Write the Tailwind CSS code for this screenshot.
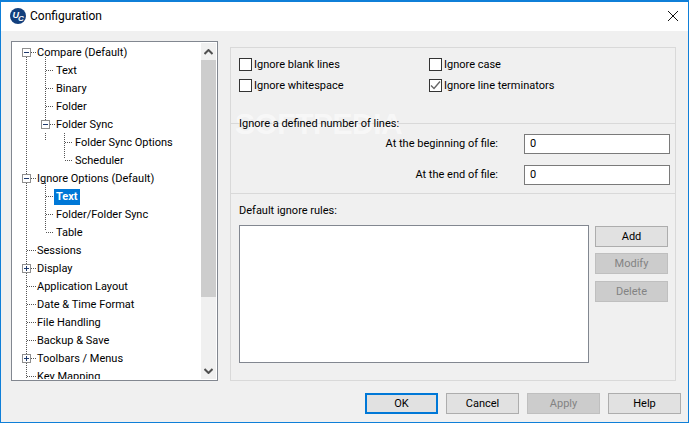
<!doctype html>
<html lang="en">
    <head>
        <meta charset="UTF-8" />
        <title>Configuration</title>
        <script src="https://cdn.jsdelivr.net/npm/@tailwindcss/browser@4"></script>
    </head>
    <body class="m-0 overflow-hidden bg-[#f0f0f0]">
        <div class="relative flex h-[423px] w-[689px] flex-col overflow-hidden border border-t-2 border-[#0f7fd8] bg-[#f0f0f0] font-['Roboto','Noto_Sans',sans-serif] text-[11px] leading-[16px] text-black">
            <!-- watermark -->
            <span class="pointer-events-none absolute left-[234px] top-[107px] font-['Liberation_Sans',sans-serif] text-[30px] font-bold leading-[30px] tracking-[-0.5px] text-white/50">SOFTPEDIA</span>

            <!-- title bar -->
            <div class="flex h-[29px] shrink-0 items-center bg-white pb-[2px] pl-[9px] pr-[8px]">
                <svg width="16" height="16" viewBox="0 0 16 16" class="shrink-0">
                    <circle cx="8" cy="8" r="8" fill="#123f7d" />
                    <text x="2.6" y="9.5" fill="#fff" font-family="Liberation Sans" font-size="9" font-weight="700" font-style="italic">U</text>
                    <text x="8" y="13" fill="#fff" font-family="Liberation Sans" font-size="8" font-weight="700" font-style="italic">C</text>
                </svg>
                <span class="ml-[4px] mt-px flex-1 text-[12px]">Configuration</span>
                <svg width="12" height="12" viewBox="0 0 12 12" class="mr-[1px] mt-px shrink-0">
                    <path d="M1 1 L11 11 M11 1 L1 11" stroke="#111" stroke-width="1" fill="none" />
                </svg>
            </div>

            <div class="flex min-h-0 flex-1 pl-[10px] pr-[12px] pt-[10px]">
                <!-- tree -->
                <div class="relative flex h-[340px] w-[207px] shrink-0 overflow-hidden border border-[#828790] bg-white p-px">
                    <div class="relative h-[336px] w-[188px] overflow-hidden">
                        <svg width="188" height="336" class="absolute left-0 top-0" fill="none" stroke="#555" stroke-dasharray="1 1">
                            <path d="M13.5 14V336" />
                            <path d="M32.5 14V80M32.5 90V98" />
                            <path d="M51.5 90V116" />
                            <path d="M32.5 140V188" />
                            <path d="M18 9.5H23M33 27.5H41M33 45.5H41M33 63.5H41M37 81.5H42M52 99.5H60M52 117.5H60M18 135.5H23M33 153.5H41M33 171.5H41M33 189.5H41M14 207.5H23M18 225.5H23M14 243.5H23M14 261.5H23M14 279.5H23M14 297.5H23M18 315.5H23M14 333.5H23" />
                        </svg>
                        <svg width="188" height="336" class="absolute left-0 top-0">
                            <g fill="#fff" stroke="#8f8f8f">
                                <rect x="9.5" y="5.5" width="8" height="8" />
                                <rect x="28.5" y="77.5" width="8" height="8" />
                                <rect x="9.5" y="131.5" width="8" height="8" />
                                <rect x="9.5" y="221.5" width="8" height="8" />
                                <rect x="9.5" y="311.5" width="8" height="8" />
                            </g>
                            <path d="M11 9.5H16M30 81.5H35M11 135.5H16M11 225.5H16M11 315.5H16M13.5 223V228M13.5 313V318" stroke="#1e3a6e" fill="none" />
                        </svg>
                        <ul class="relative pt-px">
                            <li class="flex h-[18px] items-center pl-[24px]">Compare (Default)</li>
                            <li class="flex h-[18px] items-center pl-[43px]">Text</li>
                            <li class="flex h-[18px] items-center pl-[43px]">Binary</li>
                            <li class="flex h-[18px] items-center pl-[43px]">Folder</li>
                            <li class="flex h-[18px] items-center pl-[43px]">Folder Sync</li>
                            <li class="flex h-[18px] items-center pl-[62px]">Folder Sync Options</li>
                            <li class="flex h-[18px] items-center pl-[62px]">Scheduler</li>
                            <li class="flex h-[18px] items-center pl-[24px]">Ignore Options (Default)</li>
                            <li class="flex h-[18px] items-center pl-[41px]"><span class="bg-[#0078d7] px-[2px] font-bold text-white">Text</span></li>
                            <li class="flex h-[18px] items-center pl-[43px]">Folder/Folder Sync</li>
                            <li class="flex h-[18px] items-center pl-[43px]">Table</li>
                            <li class="flex h-[18px] items-center pl-[24px]">Sessions</li>
                            <li class="flex h-[18px] items-center pl-[24px]">Display</li>
                            <li class="flex h-[18px] items-center pl-[24px]">Application Layout</li>
                            <li class="flex h-[18px] items-center pl-[24px]">Date &amp; Time Format</li>
                            <li class="flex h-[18px] items-center pl-[24px]">File Handling</li>
                            <li class="flex h-[18px] items-center pl-[24px]">Backup &amp; Save</li>
                            <li class="flex h-[18px] items-center pl-[24px]">Toolbars / Menus</li>
                            <li class="flex h-[18px] items-center pl-[24px]">Key Mapping</li>
                        </ul>
                    </div>
                    <!-- scrollbar -->
                    <div class="flex h-[336px] w-[15px] flex-col bg-[#f0f0f0]">
                        <div class="flex h-[17px] items-center justify-center">
                            <svg width="9" height="6" viewBox="0 0 9 6"><path d="M0.5 5 L4.5 1 L8.5 5" stroke="#505050" stroke-width="2" fill="none" /></svg>
                        </div>
                        <div class="h-[237px] bg-[#cdcdcd]"></div>
                        <div class="flex-1"></div>
                        <div class="flex h-[17px] items-center justify-center">
                            <svg width="9" height="6" viewBox="0 0 9 6"><path d="M0.5 1 L4.5 5 L8.5 1" stroke="#505050" stroke-width="2" fill="none" /></svg>
                        </div>
                    </div>
                </div>

                <!-- options panel -->
                <div class="ml-[12px] mt-[6px] flex h-[334px] w-[446px] flex-col border border-[#d9d9d9]">
                    <div class="grid h-[76px] shrink-0 grid-cols-[190px_1fr] content-start gap-y-[8px] border-b border-[#d9d9d9] pl-[8px] pt-[10px]">
                        <label class="flex h-[13px] items-center gap-[2px]"><span class="h-[13px] w-[13px] border border-[#333] bg-white"></span>Ignore blank lines</label>
                        <label class="flex h-[13px] items-center gap-[2px]"><span class="h-[13px] w-[13px] border border-[#333] bg-white"></span>Ignore case</label>
                        <label class="flex h-[13px] items-center gap-[2px]"><span class="h-[13px] w-[13px] border border-[#333] bg-white"></span>Ignore whitespace</label>
                        <label class="flex h-[13px] items-center gap-[2px]">
                            <span class="flex h-[13px] w-[13px] items-center justify-center border border-[#333] bg-white">
                                <svg width="11" height="11" viewBox="0 0 11 11"><path d="M1 5.5 L4 8.5 L10 1.5" stroke="#666" stroke-width="1.4" fill="none" /></svg>
                            </span>Ignore line terminators
                        </label>
                    </div>

                    <div class="relative h-[70px] shrink-0 border-b border-[#d9d9d9]">
                        <span class="absolute left-[7px] top-[-8px] pl-px">Ignore a defined number of lines:</span>
                        <div class="flex flex-col gap-[11px] pr-[5px] pt-[10px]">
                            <div class="flex items-center justify-end">
                                <span>At the beginning of file:</span>
                                <span class="ml-[26px] flex h-[20px] w-[146px] items-center border border-[#7a7a7a] bg-white pl-[5px]">0</span>
                            </div>
                            <div class="flex items-center justify-end">
                                <span>At the end of file:</span>
                                <span class="ml-[26px] flex h-[20px] w-[146px] items-center border border-[#7a7a7a] bg-white pl-[5px]">0</span>
                            </div>
                        </div>
                    </div>

                    <div class="pl-[8px] pt-[9px]">
                        <div class="h-[16px]">Default ignore rules:</div>
                        <div class="mt-[6px] flex">
                            <div class="h-[138px] w-[350px] border border-[#828790] bg-white"></div>
                            <div class="ml-[6px] mt-px flex flex-col">
                                <button class="h-[21px] w-[73px] border border-[#adadad] bg-[#e1e1e1] pt-px">Add</button>
                                <button class="mt-[6px] h-[21px] w-[73px] border border-[#bfbfbf] bg-[#cccccc] pt-px text-[#838383]">Modify</button>
                                <button class="mt-[7px] h-[21px] w-[73px] border border-[#bfbfbf] bg-[#cccccc] pt-px text-[#838383]">Delete</button>
                            </div>
                        </div>
                    </div>
                </div>
            </div>

            <!-- dialog buttons -->
            <div class="flex h-[29px] shrink-0 justify-end gap-[8px] pb-[7px] pr-[7px]">
                <button class="h-[21px] w-[73px] border-2 border-[#0078d7] bg-[#e1e1e1] pt-px">OK</button>
                <button class="h-[21px] w-[73px] border border-[#adadad] bg-[#e1e1e1] pt-px">Cancel</button>
                <button class="h-[21px] w-[73px] border border-[#bfbfbf] bg-[#cccccc] pt-px text-[#838383]">Apply</button>
                <button class="h-[21px] w-[73px] border border-[#adadad] bg-[#e1e1e1] pt-px">Help</button>
            </div>
        </div>
    </body>
</html>
